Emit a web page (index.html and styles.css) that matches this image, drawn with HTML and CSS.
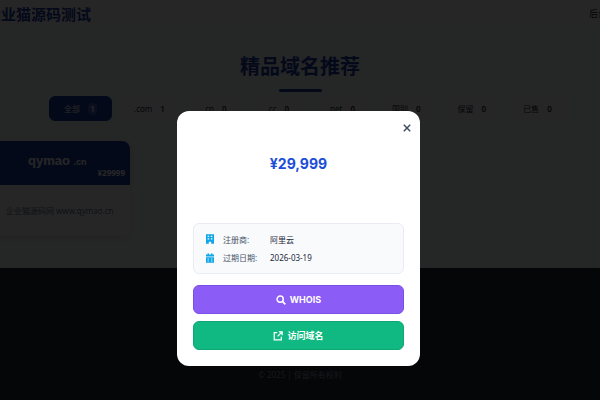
FILE: index.html
```html
<!DOCTYPE html>
<html lang="zh-CN">
<head>
  <meta charset="UTF-8">
  <meta name="viewport" content="width=device-width, initial-scale=1.0">
  <title>企业猫源码测试</title>
  <link rel="stylesheet" href="styles.css">
</head>
<body>
  <header class="site-header">
    <div class="logo">企业猫源码测试</div>
    <a class="admin-link">后台管理</a>
  </header>

  <main class="content">
    <h1 class="section-title">精品域名推荐</h1>
    <div class="title-line"></div>

    <div class="filters">
      <button class="filter active">全部 <span class="count">1</span></button>
      <button class="filter">.com <span class="count">1</span></button>
      <button class="filter">.cn <span class="count">0</span></button>
      <button class="filter">.cc <span class="count">0</span></button>
      <button class="filter">.net <span class="count">0</span></button>
      <button class="filter">国别 <span class="count">0</span></button>
      <button class="filter">保留 <span class="count">0</span></button>
      <button class="filter">已售 <span class="count">0</span></button>
    </div>

    <div class="domain-card">
      <div class="card-top">
        <div class="card-name">qymao <small>.cn</small></div>
        <div class="card-price">¥29999</div>
      </div>
      <div class="card-desc">企业猫源码网 www.qymao.cn</div>
    </div>
  </main>

  <footer class="site-footer">
    <div class="copyright">© 2025 | 保留所有权利</div>
  </footer>

  <div class="overlay">
    <div class="modal">
      <button class="close">
        <svg viewBox="0 0 10 10" width="8" height="8"><path d="M1 1l8 8M9 1l-8 8" stroke="#3f4a5f" stroke-width="1.8" fill="none"/></svg>
      </button>
      <div class="price-wrap">
        <div class="price">¥29,999</div>
      </div>
      <div class="info-box">
        <div class="info-row">
          <svg class="info-icon" viewBox="0 0 10 12" width="8" height="10"><path fill="#0ea5e9" fill-rule="evenodd" d="M0 0h10v12H6.500V9.500h-3V12H0zM2 2v1.500h2V2zm4 0v1.500h2V2zM2 5v1.500h2V5zm4 0v1.500h2V5z"/></svg>
          <span class="info-label">注册商:</span>
          <span class="info-value">阿里云</span>
        </div>
        <div class="info-row">
          <svg class="info-icon" viewBox="0 0 10 12" width="8" height="10"><path fill="#0ea5e9" fill-rule="evenodd" d="M2 0h1.500v1.500h3V0H8v1.500h2V4H0V1.500h2zM0 5h10v7H0zm2 1.500V8h1.500V6.500zm4.500 0V8H8V6.500zM2 9v1.500h1.500V9zm4.500 0v1.500H8V9z"/></svg>
          <span class="info-label">过期日期:</span>
          <span class="info-value">2026-03-19</span>
        </div>
      </div>
      <button class="action whois">
        <svg viewBox="0 0 12 12" width="10" height="10"><circle cx="5" cy="5" r="3.700" stroke="#fff" stroke-width="1.800" fill="none"/><path d="M8 8l3.200 3.200" stroke="#fff" stroke-width="2" fill="none"/></svg>
        WHOIS
      </button>
      <button class="action visit">
        <svg viewBox="0 0 12 12" width="10" height="10"><path d="M5 2H1.500v8.500H10V7M7 1h4v4M11 1L5.500 6.500" stroke="#fff" stroke-width="1.500" fill="none"/></svg>
        访问域名
      </button>
    </div>
  </div>
</body>
</html>
```

FILE: styles.css
```css
* {
  box-sizing: border-box;
}
html, body {
  height: 100%;
}
body {
  margin: 0;
  height: 400px;
  overflow: hidden;
  display: flex;
  flex-direction: column;
  font-family: "Noto Sans", "Noto Sans CJK SC", sans-serif;
  background-color: #f8fafc;
  color: #1e293b;
}
.site-header {
  height: 26px;
  margin: 0 -25px 0 -14px;
  display: flex;
  justify-content: space-between;
  align-items: center;
  background-color: #ffffff;
  flex-shrink: 0;
}
.logo {
  font-size: 15px;
  font-weight: 700;
  color: #1e40af;
}
.admin-link {
  font-size: 9px;
  color: #1e293b;
}
.content {
  flex: 1;
  display: flex;
  flex-direction: column;
  align-items: center;
  padding-top: 28px;
  min-height: 0;
}
.section-title {
  margin: 0;
  font-size: 20px;
  line-height: 26px;
  font-weight: 700;
  color: #1e40af;
}
.title-line {
  width: 43px;
  height: 3px;
  margin-top: 9px;
  border-radius: 2px;
  background-color: #1e40af;
}
.filters {
  display: flex;
  gap: 7px;
  margin-top: 4px;
  width: 100%;
  padding-left: 49px;
}
.filter {
  height: 25px;
  min-width: 56px;
  padding: 0 14px;
  display: flex;
  align-items: center;
  justify-content: center;
  gap: 8px;
  border: 1px solid #f1f5f9;
  border-radius: 6px;
  background-color: #ffffff;
  font-family: inherit;
  font-size: 8px;
  color: #1e293b;
}
.filter.active {
  background-color: #1e40af;
  color: #ffffff;
  border-color: #1e40af;
}
.count {
  font-size: 8px;
  font-weight: 600;
}
.filter.active .count {
  width: 9px;
  height: 12px;
  line-height: 12px;
  border-radius: 5px;
  background-color: rgba(255, 255, 255, 0.2);
}
.domain-card {
  align-self: flex-start;
  width: 170px;
  height: 95px;
  margin: 20px 0 0 -40px;
  border-radius: 8px;
  overflow: hidden;
  background-color: #ffffff;
  box-shadow: 0 2px 5px rgba(0, 0, 0, 0.08);
}
.card-top {
  position: relative;
  height: 44px;
  padding-left: 68px;
  padding-top: 12px;
  background-color: #1e40af;
  color: #ffffff;
}
.card-name {
  font-family: "Liberation Sans", sans-serif;
  font-size: 13px;
  line-height: 16px;
  font-weight: 700;
}
.card-name small {
  font-size: 9px;
}
.card-price {
  position: absolute;
  right: 5px;
  bottom: 7px;
  font-size: 8px;
  font-weight: 700;
}
.card-desc {
  padding: 20px 0 0 46px;
  font-size: 8px;
  color: #64748b;
}
.site-footer {
  height: 132px;
  flex-shrink: 0;
  background-color: #1e293b;
  padding-top: 101px;
  text-align: center;
}
.copyright {
  font-size: 8px;
  color: #94a3b8;
}
.overlay {
  position: fixed;
  inset: 0;
  padding: 111px 180px 0 177px;
  background-color: rgba(0, 0, 0, 0.85);
}
.modal {
  position: relative;
  width: 243px;
  height: 255px;
  padding: 0 16px;
  border-radius: 12px;
  background-color: #ffffff;
}
.close {
  position: absolute;
  top: 12px;
  right: 8px;
  width: 10px;
  height: 10px;
  padding: 0;
  display: flex;
  align-items: center;
  justify-content: center;
  border: none;
  background: none;
}
.price-wrap {
  height: 112px;
  display: flex;
  align-items: center;
  justify-content: center;
  padding-bottom: 7px;
}
.price {
  font-family: Inter, sans-serif;
  font-size: 14px;
  font-weight: 700;
  color: #1d4ed8;
}
.info-box {
  height: 51px;
  padding: 6px 12px;
  display: flex;
  flex-direction: column;
  justify-content: space-around;
  border: 1px solid #e9edf3;
  border-radius: 6px;
  background-color: #f8fafc;
}
.info-row {
  display: flex;
  align-items: center;
  font-size: 8px;
}
.info-icon {
  margin-right: 9px;
}
.info-label {
  width: 47px;
  color: #475569;
}
.info-value {
  color: #1e293b;
}
.action {
  width: 100%;
  height: 29px;
  margin-top: 11px;
  display: flex;
  align-items: center;
  justify-content: center;
  gap: 4px;
  border: 1px solid transparent;
  border-radius: 6px;
  font-family: Inter, "Noto Sans CJK SC", sans-serif;
  font-size: 9px;
  font-weight: 700;
  color: #ffffff;
}
.action + .action {
  margin-top: 7px;
}
.whois {
  background-color: #8b5cf6;
  border-color: #7c4ee8;
}
.visit {
  background-color: #10b981;
  border-color: #0ea672;
}
```
